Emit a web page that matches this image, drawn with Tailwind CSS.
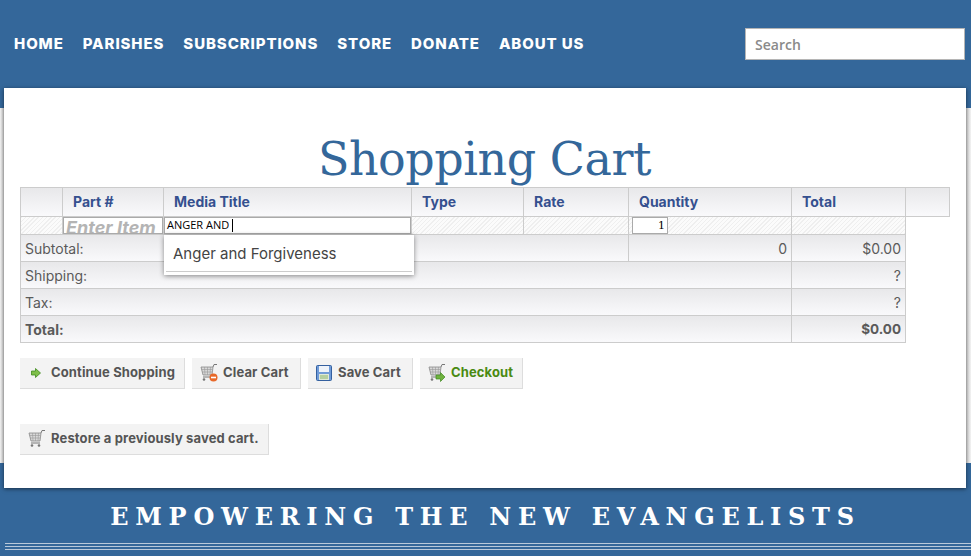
<!DOCTYPE html>
<html lang="en">
<head>
  <meta charset="UTF-8">
  <meta name="viewport" content="width=device-width, initial-scale=1.0">
  <title>Shopping Cart</title>
  <script src="https://cdn.jsdelivr.net/npm/@tailwindcss/browser@4"></script>
</head>
<body class="bg-[#34679a] font-['Inter',sans-serif] h-[556px] overflow-hidden">
  <!-- top nav -->
  <header class="h-[88px] flex items-start justify-between pl-[14px] pr-[6px]">
    <nav class="flex gap-[19px] pt-[35px] text-[15px] leading-[18px] font-extrabold tracking-[0.06em] text-white">
      <a href="#">HOME</a>
      <a href="#">PARISHES</a>
      <a href="#">SUBSCRIPTIONS</a>
      <a href="#">STORE</a>
      <a href="#">DONATE</a>
      <a href="#">ABOUT US</a>
    </nav>
    <input type="text" placeholder="Search" class="mt-[28px] w-[220px] h-[32px] px-[9px] bg-white border border-[#b5b5b5] font-['Open_Sans',sans-serif] text-[14px] font-semibold placeholder:text-[#8a8a8a] outline-none">
  </header>

  <div class="flex h-[400px]">
    <div class="w-1 pt-5 pb-[25px]"><div class="h-full bg-linear-to-r from-[#f4f4f4] to-[#d4d4d4]"></div></div>

    <main class="relative w-[962px] bg-white shadow-[0_1px_4px_rgba(0,0,0,0.55)] pl-4">
      <h1 class="h-[99px] pt-[42px] pr-[17px] text-center font-['DejaVu_Serif'] text-[46px] leading-[58px] font-normal tracking-[-0.01em] text-[#34679a]">Shopping Cart</h1>

      <table class="table-fixed border-collapse w-[929px] text-[14px] text-[#5a5a5a]">
        <colgroup>
          <col class="w-[42px]"><col class="w-[101px]"><col class="w-[248px]"><col class="w-[112px]"><col class="w-[105px]"><col class="w-[163px]"><col class="w-[114px]"><col class="w-[44px]">
        </colgroup>
        <thead>
          <tr class="h-[29px] text-left font-bold text-[#35508f] bg-linear-to-b from-[#e8e8ea] to-[#fafafc]">
            <th class="border border-[#ccc]"></th>
            <th class="border border-[#ccc] pl-[10px] pb-[1px]">Part #</th>
            <th class="border border-[#ccc] pl-[10px] pb-[1px]">Media Title</th>
            <th class="border border-[#ccc] pl-[10px] pb-[1px]">Type</th>
            <th class="border border-[#ccc] pl-[10px] pb-[1px]">Rate</th>
            <th class="border border-[#ccc] pl-[10px] pb-[1px]">Quantity</th>
            <th class="border border-[#ccc] pl-[10px] pb-[1px]">Total</th>
            <th class="border border-[#ccc]"></th>
          </tr>
        </thead>
        <tbody>
          <tr class="h-[18px] bg-[repeating-linear-gradient(135deg,#efefef_0,#efefef_1px,#fbfbfb_1px,#fbfbfb_3px)]">
            <td class="border border-[#ccc]"></td>
            <td class="border border-[#ccc] p-0">
              <div class="h-[17px] overflow-hidden bg-white border border-[#aaa] pl-[2px] text-[18px] leading-[20px] font-bold italic text-[#b4b4b4] whitespace-nowrap">Enter Item</div>
            </td>
            <td class="border border-[#ccc] p-0">
              <div class="h-[17px] flex items-center bg-white border border-[#aaa] pl-[2px] font-['Open_Sans',sans-serif] text-[11px] text-black whitespace-nowrap">ANGER AND<span class="ml-[3px] w-px h-[13px] bg-black"></span></div>
            </td>
            <td class="border border-[#ccc]"></td>
            <td class="border border-[#ccc]"></td>
            <td class="border border-[#ccc] p-0 pl-[3px]">
              <div class="w-[36px] h-[17px] bg-white border border-[#aaa] pr-[2px] text-right font-['DejaVu_Serif'] text-[11px] leading-[15px] text-black">1</div>
            </td>
            <td class="border border-[#ccc]"></td>
          </tr>
          <tr class="h-[27px] bg-linear-to-b from-[#e8e8ea] to-[#fafafc]">
            <td colspan="5" class="border border-[#ccc] pl-[4px]">Subtotal:</td>
            <td class="border border-[#ccc] pr-[4px] text-right">0</td>
            <td class="border border-[#ccc] pr-[4px] text-right">$0.00</td>
          </tr>
          <tr class="h-[27px] bg-linear-to-b from-[#e8e8ea] to-[#fafafc]">
            <td colspan="6" class="border border-[#ccc] pl-[4px]">Shipping:</td>
            <td class="border border-[#ccc] pr-[4px] text-right">?</td>
          </tr>
          <tr class="h-[27px] bg-linear-to-b from-[#e8e8ea] to-[#fafafc]">
            <td colspan="6" class="border border-[#ccc] pl-[4px]">Tax:</td>
            <td class="border border-[#ccc] pr-[4px] text-right">?</td>
          </tr>
          <tr class="h-[27px] font-bold bg-linear-to-b from-[#e8e8ea] to-[#fafafc]">
            <td colspan="6" class="border border-[#ccc] pl-[4px]">Total:</td>
            <td class="border border-[#ccc] pr-[4px] text-right text-[13.5px]">$0.00</td>
          </tr>
        </tbody>
      </table>

      <!-- autocomplete menu -->
      <div class="absolute left-[160px] top-[147px] w-[250px] h-[40px] bg-white shadow-[0_1px_5px_rgba(0,0,0,0.45)] px-[2px]">
        <div class="h-[37px] border-b border-[#ccc] pl-[7px] pt-[9px] text-[15px] leading-[20px] text-[#444]">Anger and Forgiveness</div>
      </div>

      <!-- cart buttons -->
      <div class="flex gap-[7px] mt-[15px] text-[13px] font-bold tracking-[0.01em] text-[#555]">
        <button class="h-[31px] w-[165px] flex items-center pl-[11px] gap-[10px] bg-[#f3f3f3] border-r border-b border-[#ddd]">
          <svg class="w-[10px] h-[10px]" viewBox="0 0 10 10"><path d="M0.500 3h4V0.500L9.500 5l-5 4.500V7h-4z" fill="#7fbf4a" stroke="#3f8a1f" stroke-width="0.8"/></svg>
          Continue Shopping
        </button>
        <button class="h-[31px] w-[109px] flex items-center pl-[8px] gap-[5px] bg-[#f3f3f3] border-r border-b border-[#ddd]">
          <svg class="w-[18px] h-[18px]" viewBox="0 0 18 18">
            <path d="M1 3h12l-1 8H3z" fill="#d8d8d8" stroke="#888" stroke-width="0.8"/>
            <path d="M1.500 5.500h11M2 8h10M4.500 3l.5 8M7.500 3v8M10.500 3l-.5 8" stroke="#999" stroke-width="0.6" fill="none"/>
            <path d="M13 3l1-2.500h3M3 13h9" stroke="#777" stroke-width="1" fill="none"/>
            <circle cx="4" cy="15.500" r="1.300" fill="#777"/>
            <circle cx="13.500" cy="13.500" r="4" fill="#e8692a"/><rect x="11" y="12.700" width="5" height="1.600" fill="#fff"/>
          </svg>
          Clear Cart
        </button>
        <button class="h-[31px] w-[105px] flex items-center pl-[8px] gap-[6px] bg-[#f3f3f3] border-r border-b border-[#ddd]">
          <svg class="w-[16px] h-[16px]" viewBox="0 0 16 16">
            <rect x="0.500" y="0.500" width="15" height="15" rx="1" fill="#6f9bd8" stroke="#35609f"/>
            <rect x="3" y="1" width="10" height="6" fill="#eef3fa"/>
            <rect x="3" y="9" width="10" height="6" fill="#dfe9d8"/>
            <path d="M4 11h8M4 13h8" stroke="#8ab56a" stroke-width="1"/>
          </svg>
          Save Cart
        </button>
        <button class="h-[31px] w-[103px] flex items-center pl-[8px] gap-[5px] bg-[#f3f3f3] border-r border-b border-[#ddd] text-[#4a8a12]">
          <svg class="w-[18px] h-[18px]" viewBox="0 0 18 18">
            <path d="M1 3h12l-1 8H3z" fill="#d8d8d8" stroke="#888" stroke-width="0.8"/>
            <path d="M1.500 5.500h11M2 8h10M4.500 3l.5 8M7.500 3v8M10.500 3l-.5 8" stroke="#999" stroke-width="0.6" fill="none"/>
            <path d="M13 3l1-2.500h3M3 13h9" stroke="#777" stroke-width="1" fill="none"/>
            <circle cx="4" cy="15.500" r="1.300" fill="#777"/>
            <path d="M8 11h4.500V8.500L17 13l-4.500 4.500V15H8z" fill="#6fb23f" stroke="#3f8a1f" stroke-width="0.7"/>
          </svg>
          Checkout
        </button>
      </div>

      <button class="mt-[35px] h-[31px] w-[249px] flex items-center pl-[8px] gap-[5px] bg-[#f3f3f3] border-r border-b border-[#ddd] text-[13px] font-bold tracking-[0.01em] text-[#555]">
        <svg class="w-[18px] h-[18px]" viewBox="0 0 18 18">
          <path d="M1 3h12l-1 8H3z" fill="#d8d8d8" stroke="#888" stroke-width="0.8"/>
          <path d="M1.500 5.500h11M2 8h10M4.500 3l.5 8M7.500 3v8M10.500 3l-.5 8" stroke="#999" stroke-width="0.6" fill="none"/>
          <path d="M13 3l1-2.500h3M3 13h9" stroke="#777" stroke-width="1" fill="none"/>
          <circle cx="4" cy="15.500" r="1.300" fill="#777"/><circle cx="11" cy="15.500" r="1.300" fill="#777"/>
        </svg>
        Restore a previously saved cart.
      </button>
    </main>

    <div class="w-[5px] pt-5 pb-[25px]"><div class="h-full bg-linear-to-r from-[#d4d4d4] to-[#f4f4f4]"></div></div>
  </div>

  <!-- tagline -->
  <footer class="h-[68px] pt-[14px]">
    <p class="text-center h-[41px] font-['DejaVu_Serif'] text-[24px] leading-[30px] font-bold tracking-[0.28em] text-white whitespace-nowrap">EMPOWERING THE NEW EVANGELISTS</p>
    <div class="ml-[5px] h-[7px] border-y border-[#b9c9da] flex items-center"><div class="w-full h-px bg-[#b9c9da]"></div></div>
  </footer>
</body>
</html>
